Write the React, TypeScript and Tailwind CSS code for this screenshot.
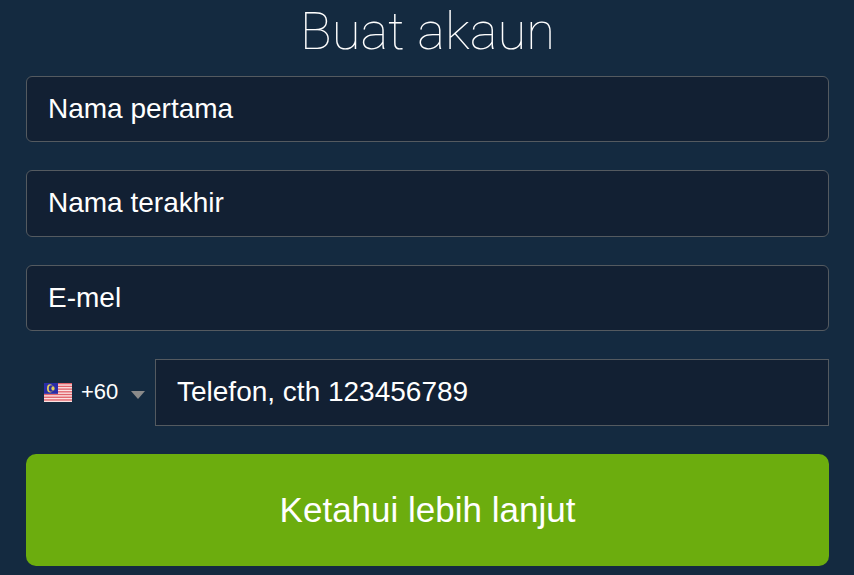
const fields = ["Nama pertama", "Nama terakhir", "E-mel"]

function MalaysiaFlag() {
  const stripes = [0, 2, 4, 6, 8, 10, 12]
  return (
    <svg width="28" height="19" viewBox="0 0 28 14" preserveAspectRatio="none" className="shrink-0">
      <rect width="28" height="14" fill="#fbe3e3" />
      {stripes.map((y) => (
        <rect key={y} y={y} width="28" height="1" fill="#e0626a" />
      ))}
      <rect width="14" height="8" fill="#2a2da6" />
      <circle cx="6" cy="4" r="3" fill="#e3cf5a" />
      <circle cx="7.2" cy="4" r="2.4" fill="#2a2da6" />
      <circle cx="9" cy="4" r="1.6" fill="#e3cf5a" />
    </svg>
  )
}

export default function App() {
  return (
    <div className="h-[575px] w-[854px] overflow-hidden bg-[#142a40] pr-[25px] pl-[26px] font-['Liberation_Sans',Arial,sans-serif] text-white">
      <h1 className="h-[75.6px] pt-[1px] text-center font-['Roboto',sans-serif] text-[52.5px] leading-[60px] font-thin">
        Buat akaun
      </h1>
      <div className="flex flex-col gap-[28px]">
        {fields.map((label) => (
          <div
            key={label}
            className="flex h-[66.5px] items-center rounded-[6px] border border-[#545a60] bg-[#122033] pl-[21px] text-[28px]"
          >
            {label}
          </div>
        ))}
        <div className="flex h-[67px] items-center">
          <div className="flex w-[129px] items-center pl-[18px]">
            <MalaysiaFlag />
            <span className="ml-[9px] pb-[2px] text-[22px]">+60</span>
            <span className="mt-[4px] ml-[13px] h-0 w-0 border-x-[7px] border-t-[8px] border-x-transparent border-t-[#8a8a8a]" />
          </div>
          <div className="flex h-full flex-1 items-center border border-[#545a60] bg-[#122033] pb-[2px] pl-[21px] text-[28px]">
            Telefon, cth 123456789
          </div>
        </div>
        <div className="flex h-[112px] items-center justify-center rounded-[10px] bg-[#6cad0e] text-[35px]">
          Ketahui lebih lanjut
        </div>
      </div>
    </div>
  )
}
